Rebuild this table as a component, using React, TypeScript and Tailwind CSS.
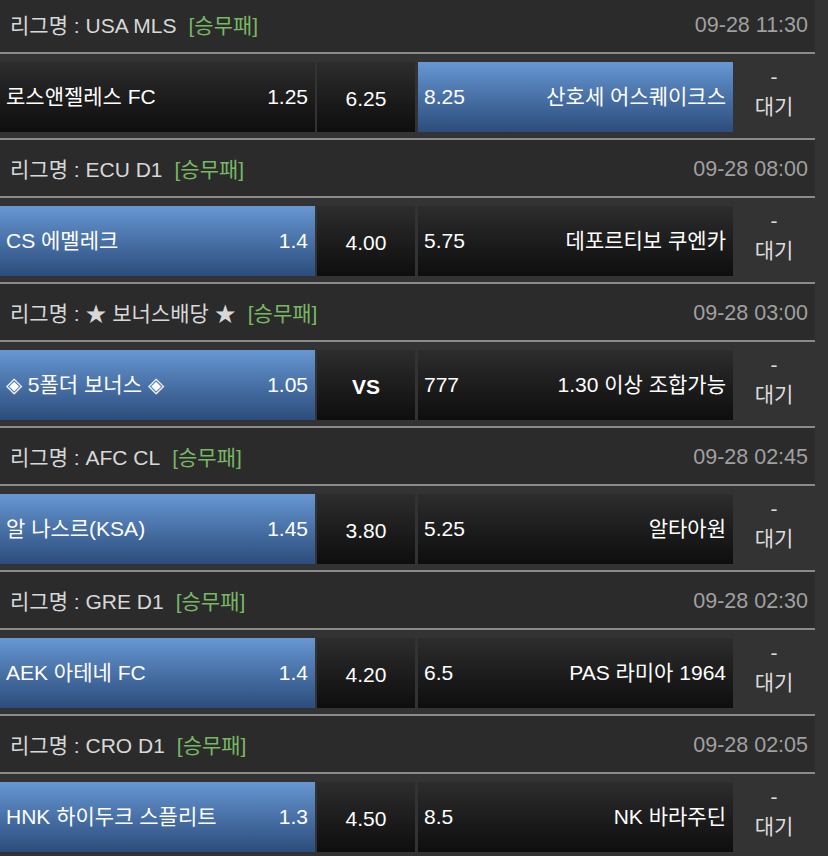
import React from "react";

type Match = {
  league: string;
  time: string;
  home: string;
  homeOdd: string;
  draw: string;
  away: string;
  awayOdd: string;
  sel: "home" | "away";
  vs?: boolean;
};

const matches: Match[] = [
  { league: "USA MLS", time: "09-28 11:30", home: "로스앤젤레스 FC", homeOdd: "1.25", draw: "6.25", awayOdd: "8.25", away: "산호세 어스퀘이크스", sel: "away" },
  { league: "ECU D1", time: "09-28 08:00", home: "CS 에멜레크", homeOdd: "1.4", draw: "4.00", awayOdd: "5.75", away: "데포르티보 쿠엔카", sel: "home" },
  { league: "★ 보너스배당 ★", time: "09-28 03:00", home: "◈ 5폴더 보너스 ◈", homeOdd: "1.05", draw: "VS", awayOdd: "777", away: "1.30 이상 조합가능", sel: "home", vs: true },
  { league: "AFC CL", time: "09-28 02:45", home: "알 나스르(KSA)", homeOdd: "1.45", draw: "3.80", awayOdd: "5.25", away: "알타아원", sel: "home" },
  { league: "GRE D1", time: "09-28 02:30", home: "AEK 아테네 FC", homeOdd: "1.4", draw: "4.20", awayOdd: "6.5", away: "PAS 라미아 1964", sel: "home" },
  { league: "CRO D1", time: "09-28 02:05", home: "HNK 하이두크 스플리트", homeOdd: "1.3", draw: "4.50", awayOdd: "8.5", away: "NK 바라주딘", sel: "home" },
];

const font = { fontFamily: '"Liberation Sans", "Noto Sans CJK KR", Arial, sans-serif' };

const selCls = "bg-gradient-to-b from-[#6797d2] to-[#2c4d7d]";
const offCls = "bg-gradient-to-b from-[#2d2d2d] to-[#0e0e0e]";

function Section({ m }: { m: Match }) {
  return (
    <div>
      <div className="w-[815px] h-[2px] bg-[#8a8a8a]" />
      <div className="w-[815px] h-[56px] bg-[#2b2b2b] flex items-center justify-between pl-[10px] pr-[7px] pt-[3px] text-[21px]">
        <div className="flex items-center">
          <span className="text-[#d8d8d8]">리그명 : {m.league}</span>
          <span className="text-[#78b764] ml-[12px]">[승무패]</span>
        </div>
        <span className="text-[#a0a0a0] text-[21.5px]">{m.time}</span>
      </div>
      <div className="w-[815px] h-[2px] bg-[#8a8a8a]" />
      <div className="w-[815px] pt-[8px] pb-[6px] flex">
        <div className={`w-[315px] h-[70px] flex items-center justify-between pl-[6px] pr-[7px] text-white text-[21px] ${m.sel === "home" ? selCls : offCls}`}>
          <span>{m.home}</span>
          <span>{m.homeOdd}</span>
        </div>
        <div className={`ml-[2px] w-[98px] h-[70px] flex items-center justify-center pt-[3px] text-white text-[21px] ${offCls} ${m.vs ? "font-bold" : ""}`}>
          {m.draw}
        </div>
        <div className={`ml-[3px] w-[315px] h-[70px] flex items-center justify-between pl-[6px] pr-[7px] text-white text-[21px] ${m.sel === "away" ? selCls : offCls}`}>
          <span>{m.awayOdd}</span>
          <span>{m.away}</span>
        </div>
        <div className="flex-1 h-[70px] flex flex-col items-center text-[#dcdcdc] text-[21px] leading-[30px]">
          <span>-</span>
          <span>대기</span>
        </div>
      </div>
    </div>
  );
}

export default function App() {
  return (
    <div className="w-[828px] h-[856px] overflow-hidden bg-[#333333]" style={font}>
      <div className="-mt-[6px]">
        {matches.map((m, i) => (
          <Section key={i} m={m} />
        ))}
      </div>
    </div>
  );
}
